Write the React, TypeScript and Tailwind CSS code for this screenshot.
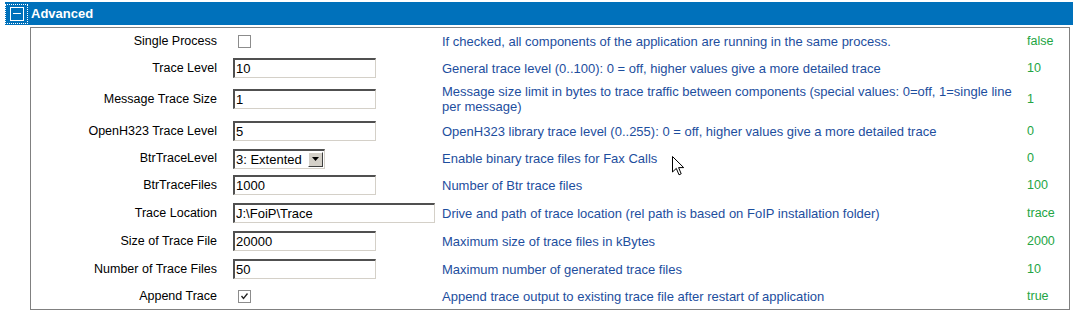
import React from "react";

// ─── Rows ─────────────────────────────────────────────────

type Control =
  | { kind: "check"; checked: boolean }
  | { kind: "text"; value: string; wide?: boolean }
  | { kind: "select"; value: string };

type Row = {
  label: string;
  control: Control;
  desc: React.ReactNode;
  value: string;
  h: string;
};

const rows: Row[] = [
  {
    label: "Single Process",
    control: { kind: "check", checked: false },
    desc: "If checked, all components of the application are running in the same process.",
    value: "false",
    h: "h-[27px]",
  },
  {
    label: "Trace Level",
    control: { kind: "text", value: "10" },
    desc: "General trace level (0..100): 0 = off, higher values give a more detailed trace",
    value: "10",
    h: "h-[27px]",
  },
  {
    label: "Message Trace Size",
    control: { kind: "text", value: "1" },
    desc: (
      <>
        Message size limit in bytes to trace traffic between components (special values: 0=off, 1=single line
        <br />
        per message)
      </>
    ),
    value: "1",
    h: "h-[34px]",
  },
  {
    label: "OpenH323 Trace Level",
    control: { kind: "text", value: "5" },
    desc: "OpenH323 library trace level (0..255): 0 = off, higher values give a more detailed trace",
    value: "0",
    h: "h-[30px]",
  },
  {
    label: "BtrTraceLevel",
    control: { kind: "select", value: "3: Extented" },
    desc: "Enable binary trace files for Fax Calls",
    value: "0",
    h: "h-[25px]",
  },
  {
    label: "BtrTraceFiles",
    control: { kind: "text", value: "1000" },
    desc: "Number of Btr trace files",
    value: "100",
    h: "h-[28px]",
  },
  {
    label: "Trace Location",
    control: { kind: "text", value: "J:\\FoiP\\Trace", wide: true },
    desc: "Drive and path of trace location (rel path is based on FoIP installation folder)",
    value: "trace",
    h: "h-[28px]",
  },
  {
    label: "Size of Trace File",
    control: { kind: "text", value: "20000" },
    desc: "Maximum size of trace files in kBytes",
    value: "2000",
    h: "h-[28px]",
  },
  {
    label: "Number of Trace Files",
    control: { kind: "text", value: "50" },
    desc: "Maximum number of generated trace files",
    value: "10",
    h: "h-[28px]",
  },
  {
    label: "Append Trace",
    control: { kind: "check", checked: true },
    desc: "Append trace output to existing trace file after restart of application",
    value: "true",
    h: "h-[26px]",
  },
];

// ─── Controls ─────────────────────────────────────────────

function Field({ c }: { c: Control }) {
  if (c.kind === "check") {
    return (
      <div className="ml-[5px] flex h-[13px] w-[13px] items-center justify-center border border-[#8c8c8c] bg-white">
        {c.checked && (
          <svg width="9" height="9" viewBox="0 0 9 9">
            <path d="M1.5 4 L3.5 6.5 L7.5 1.5" fill="none" stroke="#222" strokeWidth="1.3" />
          </svg>
        )}
      </div>
    );
  }
  if (c.kind === "select") {
    return (
      <div className="flex h-[20px] w-[92px] items-center border-t-2 border-l-2 border-b border-r border-t-[#505050] border-l-[#505050] border-b-[#d4d0c8] border-r-[#d4d0c8] bg-white">
        <span className="flex-1 pl-[1px] font-['Liberation_Sans',Arial,sans-serif] text-[13px] leading-none text-black">
          {c.value}
        </span>
        <div className="mr-[1px] flex h-[15px] w-[15px] items-center justify-center border border-t-white border-l-white border-b-[#404040] border-r-[#404040] bg-[#d4d0c8]">
          <svg width="7" height="4" viewBox="0 0 7 4">
            <path d="M0 0 H7 L3.5 4 Z" fill="#000" />
          </svg>
        </div>
      </div>
    );
  }
  return (
    <input
      readOnly
      value={c.value}
      className={`h-[20px] ${c.wide ? "w-[202px]" : "w-[143px]"} border-t-2 border-l-2 border-b border-r border-t-[#505050] border-l-[#505050] border-b-[#d4d0c8] border-r-[#d4d0c8] bg-white px-[1px] font-['Liberation_Sans',Arial,sans-serif] text-[13px] text-black outline-none`}
    />
  );
}

// ─── Page ─────────────────────────────────────────────────

export default function App() {
  return (
    <div className="relative h-[312px] w-[1075px] overflow-hidden bg-white font-['Tahoma','Liberation_Sans',Arial,sans-serif] text-[12.5px]">
      <div className="pl-[5px] pr-[2px] pt-[2px]">
        <div className="flex h-[23px] items-center bg-[#0071bb]">
          <div className="flex h-[20px] w-[23px] items-center justify-center border border-dotted border-white">
            <div className="flex h-[14px] w-[14px] items-center justify-center border border-white">
              <div className="h-[1px] w-[8px] bg-white" />
            </div>
          </div>
          <span className="ml-[3px] text-[13px] font-bold text-white">Advanced</span>
        </div>
      </div>

      <div className="ml-[30px] mt-[2px] h-[283px] w-[1040px] border border-[#808080]">
        {rows.map((r) => (
          <div key={r.label} className={`flex items-center ${r.h}`}>
            <div className="w-[202px] pr-[16px] text-right text-black">{r.label}</div>
            <div className="w-[209px]">
              <Field c={r.control} />
            </div>
            <div className="w-[585px] whitespace-nowrap text-[13px] leading-[15px] text-[#1d4e9e]">{r.desc}</div>
            <div className="text-[#23a544]">{r.value}</div>
          </div>
        ))}
      </div>

      {/* Mouse pointer */}
      <svg className="absolute left-[672px] top-[156px]" width="13" height="20" viewBox="0 0 13 20">
        <path
          d="M0.5 0.5 L0.5 16 L4.3 12.4 L7 18.8 L9.2 17.8 L6.6 11.6 L11.7 11.6 Z"
          fill="#fff"
          stroke="#000"
          strokeWidth="1"
        />
      </svg>
    </div>
  );
}
